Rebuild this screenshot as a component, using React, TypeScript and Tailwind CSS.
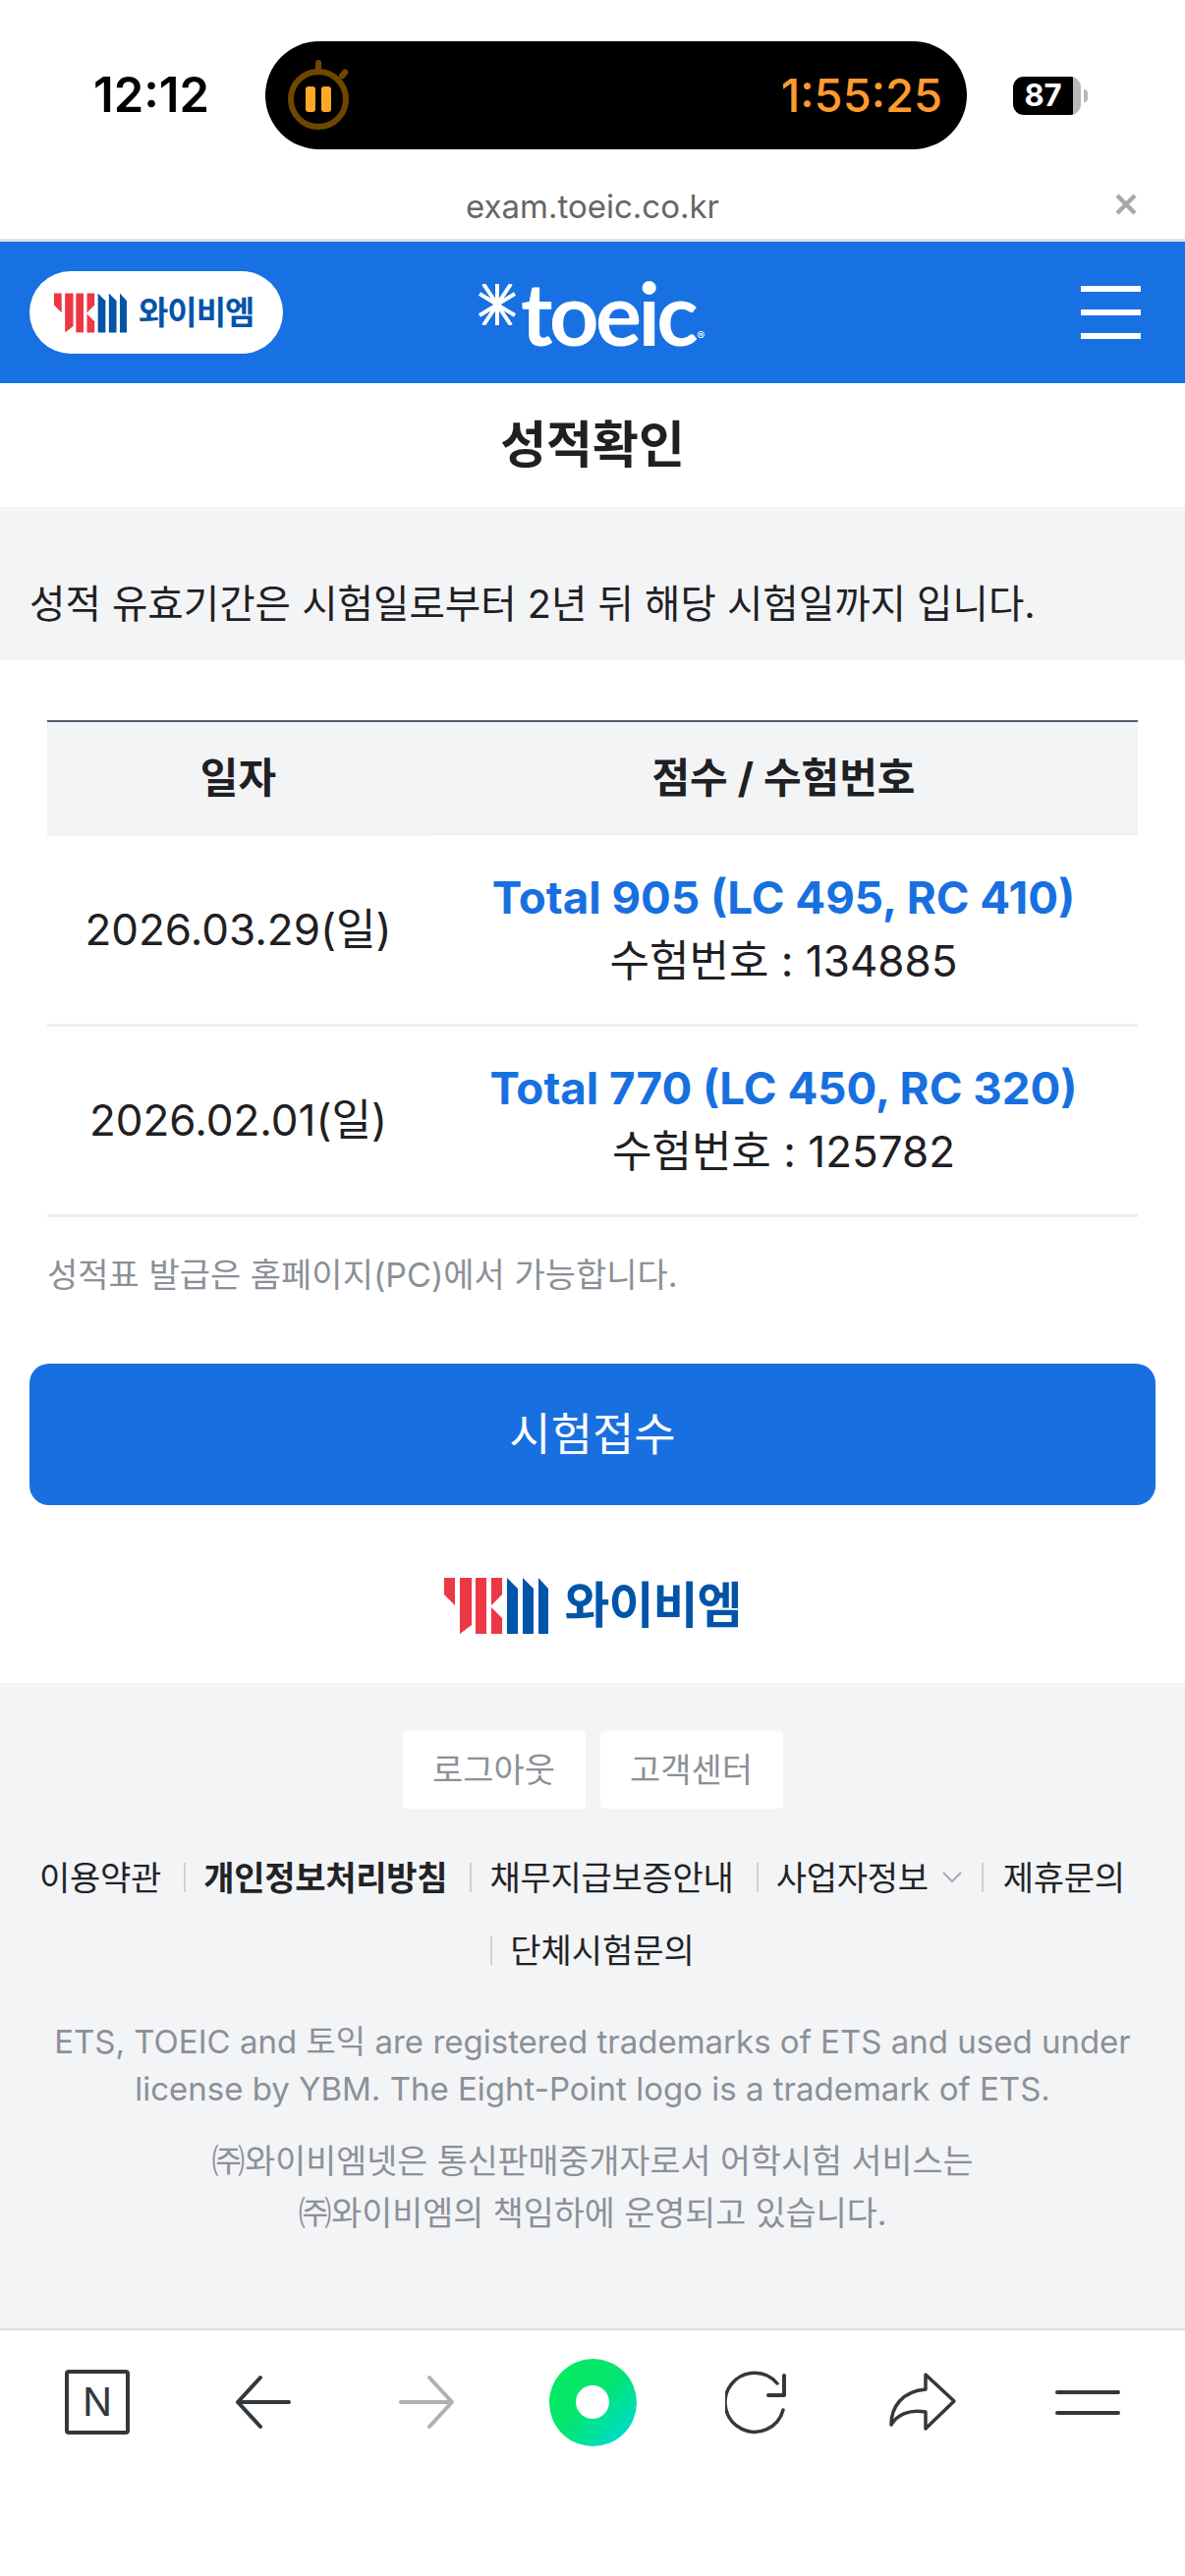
function YbmLogo({ className }: { className: string }) {
  return (
    <svg viewBox="0 0 106 57" className={className}>
      <g fill="#ec3744">
        <polygon points="0,0 11,0 11,28 0,17" />
        <polygon points="16,0 28,0 28,48 16,57" />
        <polygon points="32,0 43,0 43,57 32,57" />
        <polygon points="48,0 59,0 59,17 48,28" />
        <polygon points="48,30 59,41 59,57 48,57" />
      </g>
      <g fill="#0254a8">
        <polygon points="64,0 75,11 75,57 64,57" />
        <polygon points="80,0 91,11 91,57 80,57" />
        <polygon points="96,0 106,11 106,57 96,57" />
      </g>
    </svg>
  );
}

function StatusBar() {
  return (
    <div className="flex h-[190px] items-start pt-[42px]">
      <div className="w-[270px] pl-[95px] text-[49px] leading-[110px] font-semibold text-black">12:12</div>
      <div className="flex h-[110px] w-[714px] items-center justify-between rounded-[55px] bg-black pr-[25px] pl-[22px]">
        <svg viewBox="0 0 64 72" className="h-[72px] w-[64px]">
          <circle cx="32" cy="40" r="28" fill="none" stroke="#704700" strokeWidth="6" />
          <rect x="29" y="0" width="6" height="12" rx="3" fill="#704700" />
          <rect x="55" y="9" width="6" height="11" rx="3" fill="#704700" transform="rotate(40 58 14)" />
          <rect x="19" y="27" width="10" height="26" rx="3" fill="#ffa726" />
          <rect x="35" y="27" width="10" height="26" rx="3" fill="#ffa726" />
        </svg>
        <span className="text-[47px] font-medium text-[#ff9a2e]">1:55:25</span>
      </div>
      <div className="mt-[36px] ml-[47px] flex items-center">
        <div className="flex h-[39px] w-[69px] overflow-hidden rounded-[11px]">
          <div className="flex w-[61px] items-center justify-center bg-black text-[31px] font-bold text-white">87</div>
          <div className="w-[8px] bg-[#b8b8b8]" />
        </div>
        <div className="ml-[3px] h-[13px] w-[4px] rounded-r-full bg-[#b8b8b8]" />
      </div>
    </div>
  );
}

function UrlBar() {
  return (
    <div className="relative flex h-[56px] items-center justify-center border-b-[3px] border-[#e0e2e4] pb-[12px]">
      <span className="text-[33px] text-[#666666]">exam.toeic.co.kr</span>
      <svg viewBox="0 0 24 24" className="absolute top-[6px] right-[48px] h-[24px] w-[24px]">
        <path d="M3 3 L21 21 M21 3 L3 21" stroke="#a8a8a8" strokeWidth="4.5" />
      </svg>
    </div>
  );
}

function Header() {
  return (
    <div className="flex h-[144px] items-center bg-[#1871e2] pr-[45px] pl-[30px]">
      <div className="flex h-[84px] w-[258px] items-center gap-[12px] rounded-[42px] bg-white pl-[25px]">
        <YbmLogo className="h-[41px] w-[74px]" />
        <span className="text-[33px] leading-none font-bold tracking-[-1px] text-[#0254a8]">와이비엠</span>
      </div>
      <div className="mr-auto ml-[198px] flex items-end">
        <svg viewBox="0 0 40 42" className="mb-[31px] h-[42px] w-[40px]" stroke="white">
          <path d="M20 0 V42 M2 10 L38 32 M38 10 L2 32 M6 0 L34 42 M34 0 L6 42" strokeWidth="4" />
        </svg>
        <span className="ml-[4px] font-['Lato','Inter',sans-serif] text-[88px] leading-[88px] font-bold tracking-[-3.5px] text-white">toeic</span>
        <span className="mb-[14px] ml-[2px] text-[12px] leading-none text-white">®</span>
      </div>
      <div className="flex w-[61px] flex-col gap-[18px]">
        <div className="h-[6px] bg-white" />
        <div className="h-[6px] bg-white" />
        <div className="h-[6px] bg-white" />
      </div>
    </div>
  );
}

function ScoreTable() {
  const rows = [
    { date: "2026.03.29(일)", total: "Total 905 (LC 495, RC 410)", num: "수험번호 : 134885" },
    { date: "2026.02.01(일)", total: "Total 770 (LC 450, RC 320)", num: "수험번호 : 125782" },
  ];
  return (
    <div className="px-[48px] pt-[61px]">
      <table className="w-full table-fixed border-t-[2px] border-[#555a6a]">
        <thead>
          <tr className="h-[115px] bg-[#f3f4f6] text-[42px] font-bold text-[#1f2023]">
            <th className="w-[389px] border-b-[3px] border-[#f0f0f0]">일자</th>
            <th className="border-b-[2px] border-[#f0f0f0]">점수 / 수험번호</th>
          </tr>
        </thead>
        <tbody>
          {rows.map((r) => (
            <tr key={r.date} className="h-[194px] border-b-[3px] border-[#eeeff0] text-center text-[#1f2023]">
              <td className="text-[44px]">{r.date}</td>
              <td>
                <div className="text-[45.7px] leading-[65px] font-bold text-[#1870e0]">{r.total}</div>
                <div className="text-[44px] leading-[65px]">{r.num}</div>
              </td>
            </tr>
          ))}
        </tbody>
      </table>
      <p className="mt-[36px] text-[34px] leading-[46px] text-[#8b9098]">성적표 발급은 홈페이지(PC)에서 가능합니다.</p>
    </div>
  );
}

function Footer() {
  return (
    <div className="h-[657px] bg-[#f3f4f6] pt-[49px] text-center">
      <div className="flex justify-center gap-[15px]">
        <button className="h-[79px] w-[186px] rounded-[4px] bg-white text-[34px] text-[#8b9098]">로그아웃</button>
        <button className="h-[79px] w-[186px] rounded-[4px] bg-white text-[34px] text-[#8b9098]">고객센터</button>
      </div>
      <div className="mt-[33px] flex h-[74px] items-center pl-[40px] text-[34px] tracking-[-0.25px] text-[#222326]">
        <span>이용약관</span>
        <span className="mr-[18px] ml-[23px] h-[30px] w-[2px] bg-[#cfd1d4]" />
        <span className="font-bold">개인정보처리방침</span>
        <span className="mr-[18px] ml-[23px] h-[30px] w-[2px] bg-[#cfd1d4]" />
        <span>채무지급보증안내</span>
        <span className="mr-[18px] ml-[23px] h-[30px] w-[2px] bg-[#cfd1d4]" />
        <span>사업자정보</span>
        <svg viewBox="0 0 20 12" className="mr-[20px] ml-[14px] h-[12px] w-[20px]">
          <path d="M1 1 L10 10 L19 1" fill="none" stroke="#a8abb0" strokeWidth="2" />
        </svg>
        <span className="mr-[20px] h-[30px] w-[2px] bg-[#cfd1d4]" />
        <span>제휴문의</span>
      </div>
      <div className="flex h-[74px] items-center justify-center text-[34px] text-[#222326]">
        <span className="mr-[18px] h-[30px] w-[2px] bg-[#cfd1d4]" />
        <span>단체시험문의</span>
      </div>
      <p className="mt-[32px] text-[33px] leading-[48px] text-[#8b9098]">
        ETS, TOEIC and 토익 are registered trademarks of ETS and used under
        <br />
        license by YBM. The Eight-Point logo is a trademark of ETS.
      </p>
      <p className="mt-[23px] text-[33.7px] leading-[53px] text-[#8b9098]">
        ㈜와이비엠넷은 통신판매중개자로서 어학시험 서비스는
        <br />
        ㈜와이비엠의 책임하에 운영되고 있습니다.
      </p>
    </div>
  );
}

function Toolbar() {
  const dark = "#33383d";
  return (
    <div className="grid h-[252px] grid-cols-7 items-start border-t-[2px] border-[#dcdde0] bg-white px-[15px] pt-[29px]">
      <div className="flex h-[88px] items-center justify-center">
        <div className="flex h-[66px] w-[66px] items-center justify-center rounded-[4px] border-[4px] border-[#33383d] text-[40px] font-normal text-[#33383d]">N</div>
      </div>
      <div className="flex h-[88px] items-center justify-center">
        <svg viewBox="0 0 58 56" className="h-[56px] w-[58px]">
          <path d="M27 3 L4 28 L27 53 M4 28 H56" fill="none" stroke={dark} strokeWidth="4" strokeLinecap="round" strokeLinejoin="round" />
        </svg>
      </div>
      <div className="flex h-[88px] items-center justify-center">
        <svg viewBox="0 0 58 56" className="h-[56px] w-[58px]">
          <path d="M31 3 L54 28 L31 53 M54 28 H2" fill="none" stroke="#b0b0b0" strokeWidth="4" strokeLinecap="round" strokeLinejoin="round" />
        </svg>
      </div>
      <div className="flex h-[88px] items-center justify-center">
        <div className="flex h-[89px] w-[89px] items-center justify-center rounded-full bg-gradient-to-br from-[#07ec5c] via-[#03e571] to-[#00d6e0]">
          <div className="h-[34px] w-[34px] rounded-full bg-white" />
        </div>
      </div>
      <div className="flex h-[88px] items-center justify-center">
        <svg viewBox="0 0 66 66" className="h-[66px] w-[66px]">
          <path d="M59 41 A30 30 0 1 1 53 14" fill="none" stroke={dark} strokeWidth="3.5" strokeLinecap="round" />
          <path d="M60 6 V26 H44" fill="none" stroke={dark} strokeWidth="4" strokeLinecap="round" strokeLinejoin="round" />
        </svg>
      </div>
      <div className="flex h-[88px] items-center justify-center">
        <svg viewBox="0 0 70 62" className="h-[62px] w-[70px]">
          <path d="M38 3 L67 30 L38 58 V41 C21 38 9 44 3 54 C3 36 14 20 38 18 Z" fill="none" stroke={dark} strokeWidth="3.5" strokeLinejoin="round" />
        </svg>
      </div>
      <div className="flex h-[88px] items-center justify-center">
        <div className="flex w-[66px] flex-col gap-[17px]">
          <div className="h-[4px] rounded-full bg-[#33383d]" />
          <div className="h-[4px] rounded-full bg-[#33383d]" />
        </div>
      </div>
    </div>
  );
}

export default function App() {
  return (
    <div className="h-[2622px] w-[1206px] overflow-hidden bg-white font-['Inter','Noto_Sans_CJK_KR',sans-serif]">
      <StatusBar />
      <UrlBar />
      <Header />
      <div className="flex h-[126px] items-center justify-center text-[51px] font-semibold text-[#1f2023]">성적확인</div>
      <div className="flex h-[156px] items-end bg-[#f3f4f6] px-[30px] pb-[32px] text-[39.6px] leading-[50px] text-[#1f2023]">
        성적 유효기간은 시험일로부터 2년 뒤 해당 시험일까지 입니다.
      </div>
      <div className="h-[1041px]">
        <ScoreTable />
        <div className="mx-[30px] mt-[67px] flex h-[144px] items-center justify-center rounded-[20px] bg-[#1870e0] text-[46px] text-white">시험접수</div>
        <div className="mt-[74px] flex items-center justify-center gap-[17px]">
          <YbmLogo className="h-[57px] w-[106px]" />
          <span className="text-[50px] leading-none font-bold tracking-[-1px] text-[#0254a8]">와이비엠</span>
        </div>
      </div>
      <Footer />
      <Toolbar />
    </div>
  );
}
